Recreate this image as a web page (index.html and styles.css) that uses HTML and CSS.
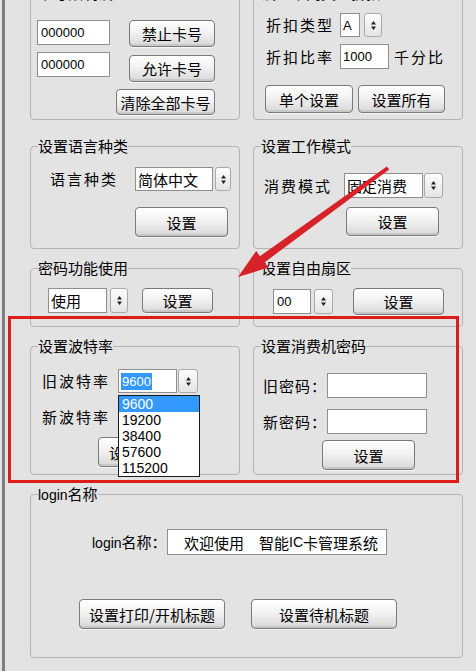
FILE: index.html
```html
<!DOCTYPE html>
<html lang="zh-CN">
<head>
    <meta charset="UTF-8">
    <title>系统参数设置</title>
    <meta name="viewport" content="width=device-width, initial-scale=1.0">
    <link rel="stylesheet" href="styles.css">
</head>
<body>
    <div class="window">
        <main class="panel">
            <!-- 卡号限制 -->
            <fieldset class="group group-top">
                <legend>卡号限制设置</legend>
                <div class="cards-body">
                    <div class="card-inputs">
                        <input class="field card-no" type="text" value="000000">
                        <input class="field card-no" type="text" value="000000">
                    </div>
                    <div class="card-buttons">
                        <button class="btn btn-card">禁止卡号</button>
                        <button class="btn btn-card">允许卡号</button>
                        <button class="btn btn-clear">清除全部卡号</button>
                    </div>
                </div>
            </fieldset>

            <!-- 折扣 -->
            <fieldset class="group group-top">
                <legend>设置不同类型折扣</legend>
                <div class="discount-body">
                    <div class="row">
                        <span class="label disc-label">折扣类型</span>
                        <div class="combo combo-type">A</div>
                        <span class="spin spin-type"><svg viewBox="0 0 5 9"><path d="M2.5 0L5 3.5H0Z M0 5.5H5L2.5 9Z"/></svg></span>
                    </div>
                    <div class="row rate-row">
                        <span class="label disc-label">折扣比率</span>
                        <input class="field rate" type="text" value="1000">
                        <span class="label suffix">千分比</span>
                    </div>
                    <div class="row disc-buttons">
                        <button class="btn btn-single">单个设置</button>
                        <button class="btn btn-all">设置所有</button>
                    </div>
                </div>
            </fieldset>

            <!-- 语言 -->
            <fieldset class="group">
                <legend>设置语言种类</legend>
                <div class="lang-body">
                    <div class="row">
                        <span class="label lang-label">语言种类</span>
                        <div class="combo combo-lang">简体中文</div>
                        <span class="spin spin-lang"><svg viewBox="0 0 5 9"><path d="M2.5 0L5 3.5H0Z M0 5.5H5L2.5 9Z"/></svg></span>
                    </div>
                    <button class="btn btn-lang">设置</button>
                </div>
            </fieldset>

            <!-- 工作模式 -->
            <fieldset class="group">
                <legend>设置工作模式</legend>
                <div class="mode-body">
                    <div class="row">
                        <span class="label mode-label">消费模式</span>
                        <div class="combo combo-mode">固定消费</div>
                        <span class="spin spin-mode"><svg viewBox="0 0 5 9"><path d="M2.5 0L5 3.5H0Z M0 5.5H5L2.5 9Z"/></svg></span>
                    </div>
                    <button class="btn btn-mode">设置</button>
                </div>
            </fieldset>

            <!-- 密码功能 -->
            <fieldset class="group">
                <legend>密码功能使用</legend>
                <div class="row use-body">
                    <div class="combo combo-use">使用</div>
                    <span class="spin spin-use"><svg viewBox="0 0 5 9"><path d="M2.5 0L5 3.5H0Z M0 5.5H5L2.5 9Z"/></svg></span>
                    <button class="btn btn-use">设置</button>
                </div>
            </fieldset>

            <!-- 自由扇区 -->
            <fieldset class="group">
                <legend>设置自由扇区</legend>
                <div class="row sector-body">
                    <div class="combo combo-sector">00</div>
                    <span class="spin spin-sector"><svg viewBox="0 0 5 9"><path d="M2.5 0L5 3.5H0Z M0 5.5H5L2.5 9Z"/></svg></span>
                    <button class="btn btn-sector">设置</button>
                </div>
            </fieldset>

            <!-- 波特率 -->
            <fieldset class="group">
                <legend>设置波特率</legend>
                <div class="baud-body">
                    <div class="row">
                        <span class="label baud-label">旧波特率</span>
                        <div class="combo combo-baud">
                            <span class="selected">9600</span>
                            <ul class="dropdown">
                                <li class="active">9600</li>
                                <li>19200</li>
                                <li>38400</li>
                                <li>57600</li>
                                <li>115200</li>
                            </ul>
                        </div>
                        <span class="spin spin-baud"><svg viewBox="0 0 5 9"><path d="M2.5 0L5 3.5H0Z M0 5.5H5L2.5 9Z"/></svg></span>
                    </div>
                    <div class="row baud-row2">
                        <span class="label baud-label">新波特率</span>
                    </div>
                    <button class="btn btn-baud">设置</button>
                </div>
            </fieldset>

            <!-- 消费机密码 -->
            <fieldset class="group">
                <legend>设置消费机密码</legend>
                <div class="pwd-body">
                    <div class="row">
                        <span class="label pwd-label">旧密码：</span>
                        <input class="field pwd" type="text" value="">
                    </div>
                    <div class="row pwd-row2">
                        <span class="label pwd-label">新密码：</span>
                        <input class="field pwd" type="text" value="">
                    </div>
                    <button class="btn btn-pwd">设置</button>
                </div>
            </fieldset>

            <!-- login 名称 -->
            <fieldset class="group group-login">
                <legend><span class="latin">login</span>名称</legend>
                <div class="login-body">
                    <div class="row login-row">
                        <span class="label login-label"><span class="latin">login</span>名称：</span>
                        <div class="field login-name">欢迎使用　智能<span class="latin">IC</span>卡管理系统</div>
                    </div>
                    <div class="row login-buttons">
                        <button class="btn btn-title">设置打印/开机标题</button>
                        <button class="btn btn-title">设置待机标题</button>
                    </div>
                </div>
            </fieldset>
        </main>
    </div>

    <!-- 标注 -->
    <div class="highlight"></div>
    <svg class="arrow" viewBox="0 0 476 671">
        <polygon points="389.2,169.6 264.7,262.3 268.3,267.6 238,277 256.2,250.9 259.9,256.2 386.8,166.4"/>
    </svg>
</body>
</html>
```

FILE: styles.css
```css
* {
    box-sizing: border-box;
}

body {
    margin: 0;
    height: 671px;
    overflow: hidden;
    position: relative;
    background: #e3e3e3;
    color: #000;
    font-family: "Noto Sans CJK SC", sans-serif;
    font-size: 15px;
}

.latin {
    font-family: "Liberation Sans", sans-serif;
    font-size: 14px;
}

/* Window frame */
.window {
    height: 671px;
    margin-left: 2px;
    padding-left: 25px;
    border-left: 3px solid #7d7d7d;
    overflow: hidden;
}

.panel {
    display: grid;
    grid-template-columns: 210px 210px;
    grid-template-rows: 143px 112px 68px 138px 173px;
    column-gap: 13px;
    row-gap: 10px;
    margin-top: -16px;
}

/* Group boxes */
.group {
    margin: 0;
    padding: 0;
    min-width: 0;
    border: 1px solid #b3b3b3;
    border-radius: 4px;
}

.group legend {
    margin-left: 7px;
    padding: 0;
    line-height: 18px;
    font-size: 15px;
}

.group-top {
    margin-bottom: 7px;
}

.group-login {
    grid-column: 1 / -1;
}

.row {
    display: flex;
    align-items: center;
}

.label {
    white-space: nowrap;
    letter-spacing: 2px;
    line-height: 20px;
}

/* Controls */
.field {
    height: 25px;
    padding: 0 3px;
    border: 1px solid #8f8f8f;
    background: #fff;
    font-family: "Liberation Sans", sans-serif;
    font-size: 13px;
    color: #000;
}

.combo {
    display: flex;
    align-items: center;
    height: 25px;
    padding-left: 2px;
    border: 1px solid #8f8f8f;
    background: #fff;
    white-space: nowrap;
}

.spin {
    display: flex;
    align-items: center;
    justify-content: center;
    height: 25px;
    border: 1px solid #a9a9a9;
    border-radius: 3px;
    background: linear-gradient(#fdfdfd, #e4e4e4);
}

.spin svg {
    width: 5px;
    height: 9px;
    fill: #222;
}

.btn {
    padding: 0;
    border: 1px solid #7a7a7a;
    border-radius: 4px;
    background: linear-gradient(#ffffff, #f2f2f2 45%, #d8d8d8);
    box-shadow: inset 0 -2px 0 #c8c8c8, inset 0 1px 0 #fff, 0 1px 0 #f6f6f6;
    font-family: "Noto Sans CJK SC", sans-serif;
    font-size: 15px;
    line-height: 1;
    color: #000;
}

/* 卡号限制 */
.cards-body {
    display: flex;
    justify-content: space-between;
    padding: 18px 24px 0 6px;
}

.card-inputs {
    display: flex;
    flex-direction: column;
    gap: 7px;
}

.card-no {
    width: 73px;
}

.card-buttons {
    display: flex;
    flex-direction: column;
    align-items: flex-end;
    gap: 8px;
}

.btn-card {
    width: 86px;
    height: 27px;
}

.btn-clear {
    width: 99px;
    height: 26px;
    margin-top: -1px;
}

/* 折扣 */
.discount-body {
    padding: 11px 0 0 12px;
}

.disc-label {
    width: 74px;
}

.combo-type {
    width: 20px;
    height: 24px;
    font-family: "Liberation Sans", sans-serif;
    font-size: 13px;
}

.spin-type {
    width: 18px;
    height: 24px;
    margin-left: 4px;
}

.rate-row {
    margin-top: 7px;
}

.rate {
    width: 49px;
    padding-left: 2px;
}

.suffix {
    margin-left: 5px;
}

.disc-buttons {
    gap: 5px;
    margin-top: 16px;
    margin-left: -1px;
}

.btn-single {
    width: 88px;
    height: 28px;
}

.btn-all {
    width: 87px;
    height: 28px;
}

/* 语言 */
.lang-body {
    padding: 12px 0 0 19px;
}

.lang-label {
    width: 85px;
}

.combo-lang {
    width: 78px;
    height: 24px;
}

.spin-lang {
    width: 16px;
    height: 24px;
    margin-left: 2px;
}

.btn-lang {
    display: block;
    width: 93px;
    height: 30px;
    margin: 16px 0 0 85px;
}

/* 工作模式 */
.mode-body {
    padding: 18px 0 0 10px;
}

.mode-label {
    width: 80px;
}

.combo-mode {
    width: 79px;
}

.spin-mode {
    width: 19px;
    margin-left: 1px;
}

.btn-mode {
    display: block;
    width: 93px;
    height: 29px;
    margin: 9px 0 0 82px;
}

/* 密码功能 / 自由扇区 */
.use-body {
    padding: 11px 0 0 17px;
}

.combo-use {
    width: 59px;
}

.spin-use {
    width: 18px;
    margin-left: 3px;
}

.btn-use {
    width: 71px;
    height: 25px;
    margin-left: 14px;
}

.sector-body {
    padding: 11px 0 0 19px;
}

.combo-sector {
    width: 38px;
    padding-left: 3px;
    font-family: "Liberation Sans", sans-serif;
    font-size: 13px;
}

.spin-sector {
    width: 19px;
    margin-left: 3px;
}

.btn-sector {
    width: 91px;
    height: 27px;
    margin-left: 20px;
}

/* 波特率 */
.baud-body {
    padding: 14px 0 0 11px;
}

.baud-label {
    width: 76px;
}

.combo-baud {
    position: relative;
    width: 59px;
    height: 24px;
    font-family: "Liberation Sans", sans-serif;
    font-size: 13px;
}

.selected {
    padding: 0 1px;
    line-height: 17px;
    background: #3399ff;
    color: #fff;
}

.dropdown {
    position: absolute;
    left: -1px;
    top: calc(100% + 3px);
    z-index: 2;
    width: 82px;
    margin: 0;
    padding: 0;
    list-style: none;
    border: 1px solid #1a1a1a;
    background: #fff;
    font-size: 14px;
    line-height: 16px;
    color: #000;
}

.dropdown li {
    padding-left: 3px;
}

.dropdown .active {
    background: #3399ff;
    color: #fff;
}

.spin-baud {
    width: 20px;
    height: 24px;
    margin-left: 1px;
}

.baud-row2 {
    height: 24px;
    margin-top: 12px;
}

.btn-baud {
    display: block;
    width: 52px;
    height: 30px;
    margin: 8px 0 0 56px;
}

/* 消费机密码 */
.pwd-body {
    padding: 18px 0 0 9px;
}

.pwd-label {
    width: 64px;
    letter-spacing: 1px;
}

.pwd {
    width: 100px;
}

.pwd-row2 {
    margin-top: 11px;
}

.btn-pwd {
    display: block;
    width: 93px;
    height: 30px;
    margin: 6px 0 0 59px;
}

/* login 名称 */
.login-body {
    padding-top: 25px;
}

.login-row {
    margin-left: 61px;
}

.login-label {
    width: 75px;
    letter-spacing: 0;
}

.login-name {
    display: flex;
    align-items: center;
    width: 220px;
    height: 26px;
    padding-left: 16px;
    font-family: "Noto Sans CJK SC", sans-serif;
    font-size: 15px;
    white-space: nowrap;
}

.login-buttons {
    gap: 26px;
    margin: 44px 0 0 48px;
}

.btn-title {
    width: 146px;
    height: 30px;
}

/* Annotations */
.highlight {
    position: absolute;
    left: 8px;
    top: 316px;
    width: 451px;
    height: 167px;
    border: 3px solid #e01b1b;
    pointer-events: none;
}

.arrow {
    position: absolute;
    left: 0;
    top: 0;
    width: 476px;
    height: 671px;
    pointer-events: none;
    fill: #d8222a;
}
```
